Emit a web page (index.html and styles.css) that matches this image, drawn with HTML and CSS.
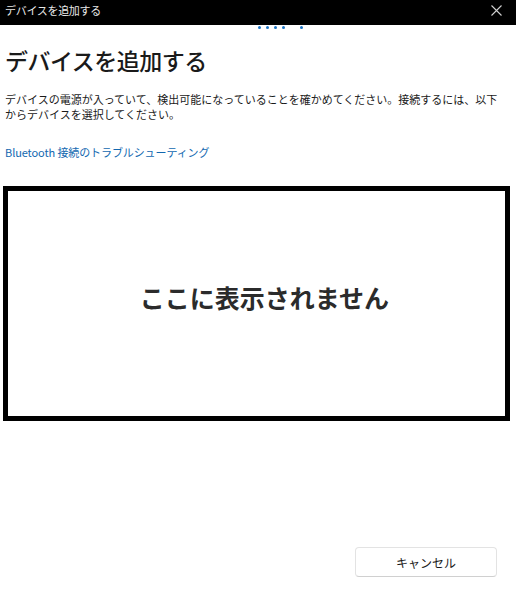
FILE: index.html
```html
<!DOCTYPE html>
<html lang="ja">
<head>
<meta charset="utf-8">
<link rel="stylesheet" href="styles.css">
</head>
<body>
<div class="titlebar">
  <span class="title">デバイスを追加する</span>
  <svg class="close" width="11" height="11" viewBox="0 0 11 11"><path d="M0.5 0.5 L10.5 10.5 M10.5 0.5 L0.5 10.5" stroke="#d0d0d0" stroke-width="1.1" fill="none"/></svg>
</div>
<div class="progress">
  <span class="dot"></span><span class="dot"></span><span class="dot"></span><span class="dot"></span><span class="dot far"></span>
</div>
<div class="content">
  <h1 class="heading">デバイスを追加する</h1>
  <p class="desc">デバイスの電源が入っていて、検出可能になっていることを確かめてください。接続するには、以下<br>からデバイスを選択してください。</p>
  <a class="link">Bluetooth 接続のトラブルシューティング</a>
</div>
<div class="box">
  <div class="boxtext">ここに表示されません</div>
</div>
<div class="footer">
  <button class="cancel">キャンセル</button>
</div>
</body>
</html>
```

FILE: styles.css
```css
html, body {
  margin: 0;
  padding: 0;
  background: #ffffff;
  width: 516px;
  height: 596px;
  overflow: hidden;
  font-family: "Noto Sans CJK JP", "Noto Sans", sans-serif;
}
.titlebar {
  height: 25px;
  background: #000000;
  display: flex;
  align-items: center;
  justify-content: space-between;
  padding: 0 14px 0 5px;
}
.title {
  color: #e8e8e8;
  font-size: 11px;
  line-height: 1;
  margin-top: -4px;
  letter-spacing: -0.3px;
}
.close {
  margin-top: -4px;
}
.progress {
  height: 4px;
  display: flex;
  align-items: center;
  padding-left: 258px;
  gap: 5px;
}
.dot {
  width: 3px;
  height: 3px;
  border-radius: 50%;
  background: #1a73c4;
}
.dot.far {
  margin-left: 10px;
}
.content {
  padding: 16px 5px 0 5px;
}
.heading {
  margin: 0;
  font-size: 23px;
  font-weight: 500;
  color: #1a1a1a;
  line-height: 30px;
  letter-spacing: -0.5px;
}
.desc {
  margin: 17px 0 0 0;
  font-size: 11px;
  line-height: 15px;
  color: #1a1a1a;
  white-space: nowrap;
}
.link {
  display: block;
  margin-top: 23px;
  font-size: 11px;
  line-height: 15px;
  color: #1268b0;
  letter-spacing: -0.1px;
}
.box {
  margin: 26px 0 0 3px;
  width: 497px;
  height: 225px;
  border: 5px solid #000000;
  display: flex;
  align-items: center;
  justify-content: center;
}
.boxtext {
  font-size: 25px;
  font-weight: 700;
  color: #2b2b2b;
  margin: 0 0 14px 16px;
}
.footer {
  display: flex;
  justify-content: flex-end;
  padding: 126px 19px 0 0;
}
.cancel {
  width: 142px;
  height: 30px;
  background: #ffffff;
  border: 1px solid #e3e3e3;
  border-bottom-color: #d0d0d0;
  border-radius: 4px;
  font-family: "Noto Sans CJK JP", sans-serif;
  font-size: 12px;
  color: #1a1a1a;
  padding: 0;
}
```
